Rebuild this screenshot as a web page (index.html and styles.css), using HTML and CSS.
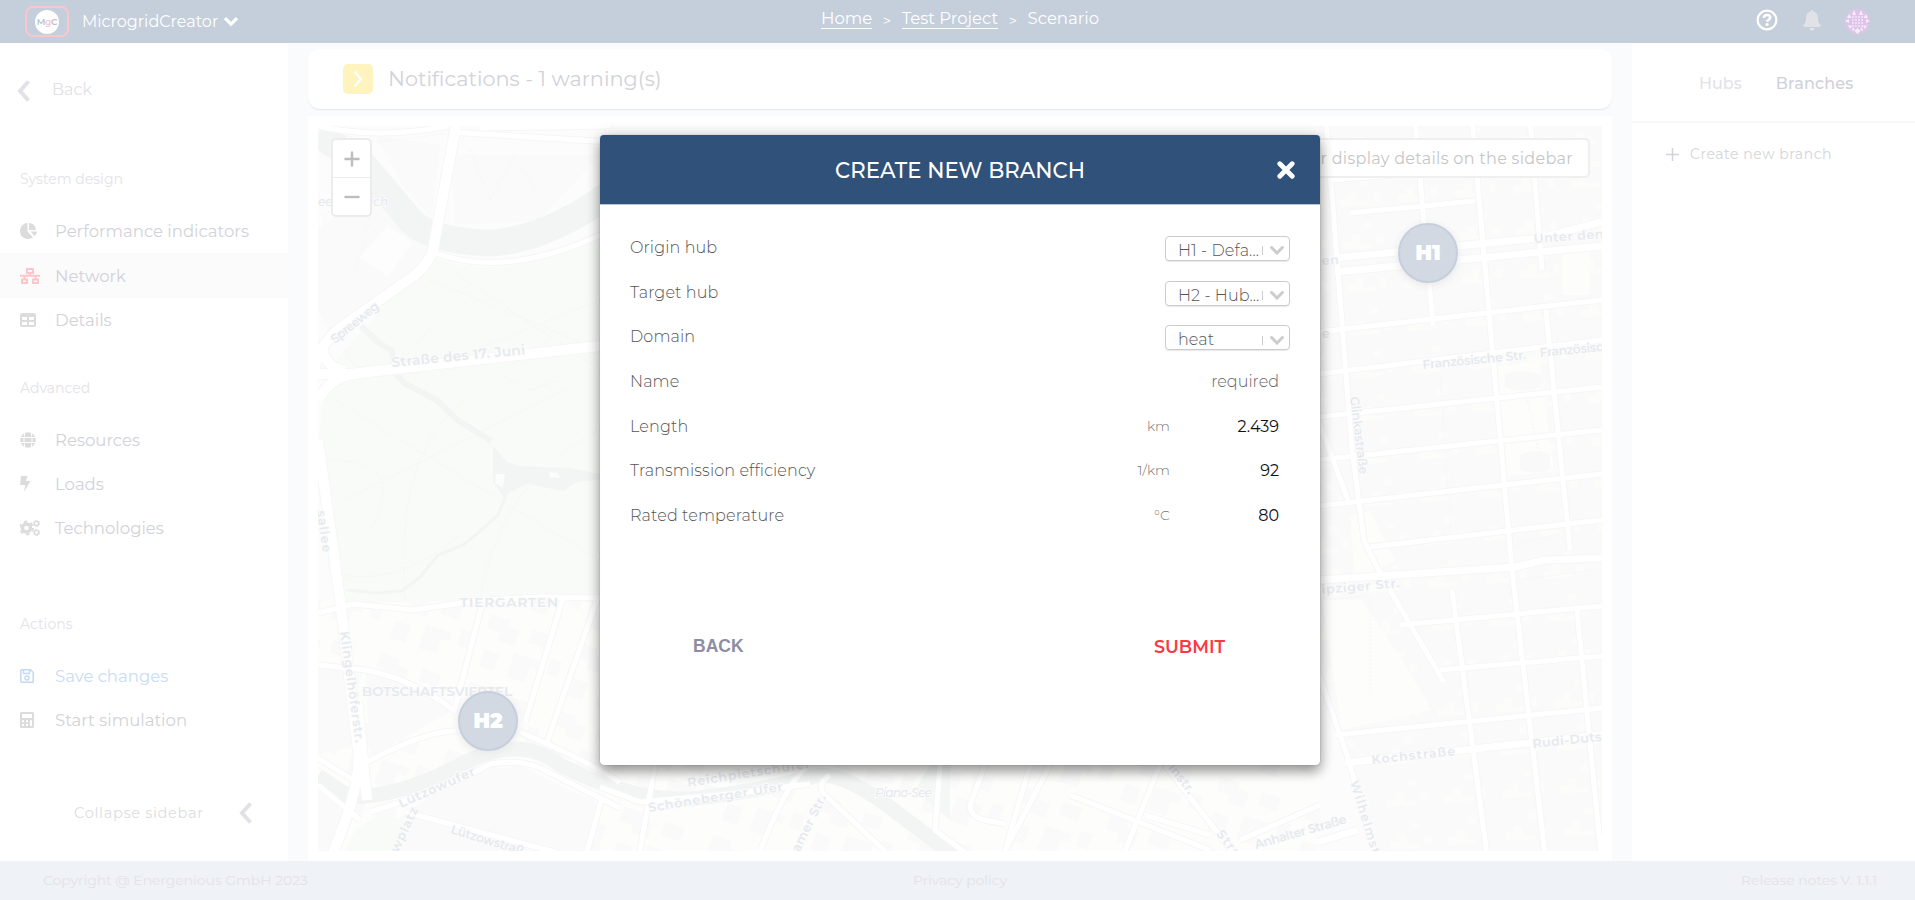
FILE: index.html
```html
<!DOCTYPE html>
<html lang="en">
<head>
<meta charset="utf-8">
<title>MicrogridCreator</title>
<link rel="stylesheet" href="styles.css">
</head>
<body>
<svg class="defs" width="0" height="0" aria-hidden="true">
  <symbol id="chev-left" viewBox="0 0 13 22"><path d="M11.500 1.500 3 11l8.500 9.500" fill="none" stroke="currentColor" stroke-width="4"/></symbol>
  <symbol id="chev-down" viewBox="0 0 14 9"><path d="M1.600 1.500 7 7l5.400-5.500" fill="none" stroke="#ccc" stroke-width="3" stroke-linecap="round"/></symbol>
</svg>
<div class="app">
  <header class="topbar">
    <div class="brand">
      <span class="logo"><span class="logo-disc">M<i>g</i>C</span></span>
      <span class="brand-name">MicrogridCreator</span>
      <svg class="brand-caret" width="16" height="11" viewBox="0 0 16 11"><path d="M2 2.200 8 8.200 14 2.200" fill="none" stroke="#fff" stroke-width="3.200"/></svg>
    </div>
    <nav class="crumbs"><a>Home</a><span class="sep">&gt;</span><a>Test Project</a><span class="sep">&gt;</span><span>Scenario</span></nav>
    <div class="tools">
      <svg class="help" width="22" height="22" viewBox="0 0 22 22"><circle cx="11" cy="11" r="9.400" fill="none" stroke="#fff" stroke-width="2.200"/><path d="M7.900 8.700C8 6.800 9.300 5.900 11 5.900s3.200 1 3.200 2.600c0 2.200-3 2.300-3 4.300" fill="none" stroke="#fff" stroke-width="2.500"/><circle cx="11.100" cy="15.500" r="1.600" fill="#fff"/></svg>
      <svg class="bell" width="18" height="21" viewBox="0 0 18 21"><path d="M9 0c.8 0 1.300.6 1.300 1.400C13.400 2 15 4.500 15 7.500c0 4.500 1 6 2.600 7.500.6.700.3 2-.9 2H1.300c-1.200 0-1.500-1.300-.9-2C2 13.500 3 12 3 7.500c0-3 1.600-5.500 4.700-6.100C7.700.6 8.200 0 9 0zM6.400 18h5.200c0 1.600-1.200 2.700-2.600 2.700S6.400 19.600 6.400 18z" fill="#e1e1e8"/></svg>
      <svg width="25" height="25" viewBox="0 0 25 25"><circle cx="12.500" cy="12.500" r="12.500" fill="#dfc3ea"/><g fill="#f4eefa"><path d="M9 1l2 5H7zM16 1l2 5h-4zM4 5l2.500 4H2zM21 5l2 4h-4.500zM0 12l4-2v4zM25 12l-4-2v4zM3 16l4 1-2 3zM22 16l-4 1 2 3zM12.500 19l3 3-3 3-3-3zM8 18l2 3-3 1zM17 18l-2 3 3 1z"/></g><path d="M7 8h11M7 11h11M7 14h11M7 17h11" stroke="#f4eefa" stroke-width="1.500" stroke-dasharray="1.700 1.400"/></svg>
    </div>
  </header>

  <div class="body">
    <aside class="sidebar">
      <a class="back"><svg width="13" height="22"><use href="#chev-left"/></svg><span>Back</span></a>
      <h6 class="sec sec-1">System design</h6>
      <a class="link"><svg width="18" height="16" viewBox="0 0 18 16"><path d="M7.500 0v8.500l5.500 5.700A8 8 0 1 1 7.500 0z" fill="#dcdcdc"/><path d="M9 0a7 7 0 0 1 7 7H9zM10.500 8.500H17a8 8 0 0 1-2.300 4.700z" fill="#dcdcdc"/></svg><span>Performance indicators</span></a>
      <a class="link active"><svg width="20" height="16" viewBox="0 0 20 16" fill="none" stroke="#fcc6cb" stroke-width="2"><path d="M7 1h6v4H7zM2 11.500h5V15H2zM13 11.500h5V15h-5zM0 7.800h20M10 5v3M4.500 8v3M15.500 8v3"/></svg><span>Network</span></a>
      <a class="link"><svg width="16" height="14" viewBox="0 0 16 14"><rect width="16" height="14" rx="2" fill="#dcdcdc"/><path d="M2 4h5v3H2zM9 4h5v3H9zM2 9h5v3H2zM9 9h5v3H9z" fill="#fff"/></svg><span>Details</span></a>
      <h6 class="sec sec-2">Advanced</h6>
      <a class="link"><svg width="16" height="16" viewBox="0 0 16 16"><circle cx="8" cy="8" r="7.800" fill="#dcdcdc"/><path d="M0 5.500h16M0 10.500h16M5 0c-1.500 5-1.500 11 0 16M11 0c1.500 5 1.500 11 0 16" fill="none" stroke="#fff" stroke-width="1"/></svg><span>Resources</span></a>
      <a class="link"><svg width="11" height="16" viewBox="0 0 11 16"><path d="M1 0h6.500L6 5h4.500L4 16l1.300-7H0z" fill="#dcdcdc"/></svg><span>Loads</span></a>
      <a class="link"><svg width="20" height="16" viewBox="0 0 20 16" fill="none" stroke="#dcdcdc"><circle cx="6.500" cy="8" r="4" stroke-width="3.400"/><circle cx="6.500" cy="8" r="6.400" stroke-width="2" stroke-dasharray="3.400 3.300"/><circle cx="16.500" cy="3.500" r="2.200" stroke-width="1.500"/><circle cx="16.500" cy="3.500" r="3.100" stroke-width=".9" stroke-dasharray="1.600 1.650"/><circle cx="16.500" cy="12.500" r="2.200" stroke-width="1.500"/><circle cx="16.500" cy="12.500" r="3.100" stroke-width=".9" stroke-dasharray="1.600 1.650"/></svg><span>Technologies</span></a>
      <h6 class="sec sec-3">Actions</h6>
      <a class="link save"><svg width="14" height="14" viewBox="0 0 14 14" fill="none" stroke="#c2d9f5" stroke-width="1.500"><path d="M.8 1.500Q.8.800 1.500.800H10.500L13.200 3.500v9q0 .7-.7.700h-11q-.7 0-.7-.7zM3.500.800v3.700h6V.800"/><circle cx="7" cy="9" r="2"/></svg><span>Save changes</span></a>
      <a class="link"><svg width="14" height="16" viewBox="0 0 14 16"><rect width="14" height="16" rx="1.500" fill="#dcdcdc"/><path d="M2 2h10v4H2zM2 8.300h2v2H2zM6 8.300h2v2H6zM10 8.300h2V14h-2zM2 12h2v2H2zM6 12h2v2H6z" fill="#fff"/></svg><span>Start simulation</span></a>
      <a class="collapse"><span>Collapse sidebar</span><svg width="13" height="22"><use href="#chev-left"/></svg></a>
    </aside>

    <main class="main">
      <section class="notice">
        <span class="notice-badge"><svg width="10" height="18" viewBox="0 0 10 18"><path d="M1.500 1.500 8 9l-6.500 7.500" fill="none" stroke="#fff" stroke-width="2"/></svg></span>
        <span class="notice-text">Notifications - 1 warning(s)</span>
      </section>
      <section class="mapcard">
        <svg class="map" viewBox="318 126 1284 725">
          <defs>
            <pattern id="blocks" width="58" height="43" patternUnits="userSpaceOnUse" patternTransform="translate(1326 131) rotate(-4.500)">
              <path d="M8 26h9v-6h8v10h12v4H8zM30 8h8v6h-8zM42 22h7v9h-7z" fill="#fcfcfa"/>
            </pattern>
            <pattern id="houses" width="93" height="71" patternUnits="userSpaceOnUse" patternTransform="rotate(18)">
              <path d="M6 6h20v7h12v16H20v-8H6zM50 8h20v14H50zM10 42h16v18H10zM40 36h28v9h-9v16H40zM76 30h12v16H76z" fill="#fafafa"/>
            </pattern>
            <g id="avenues">
              <path d="M457 120 433 250q-3 12-18 25L340 328q-22 18-25 40M318 374H350L600 346M318 400q15-26 40-26M345 371q-20-4-22-22M318 440 340 600 358 750q4 35-26 105M357 700l10 100"/>
            </g>
            <g id="streets">
              <path d="M433 252q70 28 170-18M318 613l35-9 60 6 70-10 60-3 60 1M483 600 454 712M563 598 525 722M597 600 547 742M318 665l48 5q50 10 90 42M365 763q60-32 90-32M520 732q70 30 100 50M318 758l45 28M370 812q80-25 120-48 30-5 50 4l80 40M318 785l42 35M405 812l150 40M602 798l-15 53M450 132l160 10M318 126q60 14 130 0M480 128l130-2"/>
              <path d="M1326 120 1352 450 1364 540q5 12 20 40l60 102M1415 120l18 205M1472 120l40 450 33 285M1530 120l12 150M1546 310l24 240M1577 610l24 245M1452 590l35 265M1318 672l28 80 30 103M1318 420l30 80"/>
              <path d="M1318 332 1602 300M1318 374l284-34M1318 417 1602 387M1318 460 1602 430M1318 506 1602 474M1370 547 1602 520M1400 625 1602 606M1440 670 1602 656M1335 735 1602 708M1330 180l150-12M1350 213l125-12"/>
              <path d="M655 765l-15 86M810 765q-20 10-50 86M600 787l40 15 90-8 80-10M830 775q-15 10-5 20l60 56M940 765l-5 65 40 30M985 765l-15 40q0 12 15 15l20 4M1050 765l-45 86M1070 795l140 55M1160 765l-35 86M1145 815l65 20M1030 765l-25 86M1165 765 1235 855M1240 840l80-35"/>
            </g>
            <g id="mains">
              <path d="M1335 258 1540 238 1602 222M1335 272 1602 246M1318 580 1515 567 1545 560 1602 558M1345 763 1602 735M1318 842l40-12"/>
            </g>
          </defs>
          <rect x="318" y="126" width="1284" height="725" fill="#fcfcfc"/>
          <path d="M318 600H620L1320 540V851H318z" fill="#fdfdfc"/>
          <path d="M318 600H620L1320 700V851H318z" fill="url(#houses)"/>
          <path d="M325 372 430 255q60 30 170-15V597L480 600 345 603 318 455z" fill="#f9fbf9"/>
          <path d="M375 135l65 10-8 75-30-35zM450 155h150l-60 65-85 5zM318 230l50-40 65 60-100 90-15-30z" fill="#fafafa"/>
          <path d="M388 225l24 18-24 34-28-20z" fill="#fdfdfd"/>
          <path d="M318 665h30l10 80-40 10zM365 672q45 5 85 40l-80 45zM410 810l50-35 60-10 80 40v46H360zM318 790l35 30-20 31h-15z" fill="#fafafa"/>
          <path d="M355 830l25-15 25 5-15 31h-45z" fill="#f9fbf9"/>
          <path d="M1318 126H1602V851H1380L1318 650z" fill="#fafafa"/>
          <path d="M1318 126H1602V851H1380L1318 650z" fill="url(#blocks)"/>
          <path d="M1497 366l42-5 15 110-47 5zM1562 245h28v50h-28zM1350 515l20-4 25 50-40 20zM1322 600h40l40 60 30 50-90 20z" fill="#fdfdfb"/>
          <path d="M1505 375q12-8 36 0v12q-18 8-36 0zM1520 455q15-8 30 0v15q-15 5-30 0z" fill="#f9f9f9"/>
          <!-- water -->
          <g fill="none" stroke="#f3f5f5" stroke-linejoin="round">
            <path d="M318 134 362 163 412 222Q432 241 490 243 550 240 622 185" stroke-width="27"/>
            <path d="M318 776 350 797 Q400 797 460 765 T560 765Q640 805 700 798T820 775Q850 775 900 815L960 860" stroke-width="15"/>
            <path d="M361 326l18 17 13 8 2 20 10 12 34 18 18 18 35 22" stroke-width="6"/>
            <path d="M508 490l-10 25-20 18-15 12-25 10-18 22-18 14-25 2-30-3" stroke-width="3"/>
          </g>
          <path d="M493 446l14 16 13 4 50 2 35 7v4l-28 3-14 9-36-7-20 10-2 6-12-18z" fill="#f3f5f5"/>
          <path d="M930 765h20v55l-35-30z" fill="#f5f7f7"/>
          <path d="M496 474l9 0-2 14-8-5zM549 472l9 1 2 5-10-1z" fill="#fbfcfb"/>
          <!-- footpaths -->
          <g fill="none" stroke="#f4f6f5" stroke-width="1" stroke-dasharray="2 2">
            <path d="M335 400 500 500 600 560M345 350q30 60 90-30M430 280l170 70M450 270l150 100M600 300l-200 80M405 600q-10-150 60-200M345 500l120-60 100-50M330 460q80 0 40 70M480 600q20-120 120-170M500 375l30 15 30-10v-25M340 575q60 10 120-40M325 215q30-25 45 5l-15 50-30-30zM440 235q60 25 110-12"/>
            <path d="M318 130l60 12 80-10 140 6M470 150l20 50 25-45 20 35 30-30M1527 400l14 60M1498 440l60-7M1440 375l12 170M1515 545l60-15M1515 580l80-10M1330 600l40-5v100"/>
          </g>
          <!-- road casings, then surfaces -->
          <g fill="none" stroke="#f6f6f6" stroke-linejoin="round">
            <use href="#streets" stroke-width="7"/><use href="#mains" stroke-width="9"/><use href="#avenues" stroke-width="12"/>
          </g>
          <g fill="none" stroke="#fff" stroke-linejoin="round">
            <use href="#streets" stroke-width="5"/><use href="#mains" stroke-width="7"/><use href="#avenues" stroke-width="10"/>
          </g>
          <g class="maplabels">
            <text class="thin" x="318" y="206">een</text>
            <text class="thin" x="370" y="206">ich</text>
            <text transform="translate(335 344) rotate(-39)" textLength="58">Spreeweg</text>
            <text class="big" transform="translate(392 367) rotate(-5.500)" textLength="134">Straße des 17. Juni</text>
            <text transform="translate(317 511) rotate(82)" textLength="42">sallee</text>
            <text class="big" x="460" y="607" textLength="98">TIERGARTEN</text>
            <text class="big" x="362" y="696" textLength="150">BOTSCHAFTSVIERTEL</text>
            <text transform="translate(340 632) rotate(82)" textLength="112">Klingelhöferstr.</text>
            <text transform="translate(401 808) rotate(-24)" textLength="82">Lützowufer</text>
            <text transform="translate(398 853) rotate(-65)" textLength="48">wplatz</text>
            <text transform="translate(450 833) rotate(17)" textLength="76">Lützowstraß</text>
            <text transform="translate(688 787) rotate(-9)" textLength="124">Reichpietschufer</text>
            <text transform="translate(649 812) rotate(-9)" textLength="136">Schöneberger Ufer</text>
            <text transform="translate(799 853) rotate(-64)" textLength="62">amer Str.</text>
            <text class="thin" x="875" y="797" textLength="57">Piano-See</text>
            <text transform="translate(1168 768) rotate(52)" textLength="34">instr.</text>
            <text transform="translate(1216 834) rotate(52)" textLength="30">Stra</text>
            <text transform="translate(1256 849) rotate(-16)" textLength="95">Anhalter Straße</text>
            <text transform="translate(1350 782) rotate(73)" textLength="76">Wilhelmst</text>
            <text transform="translate(1372 764) rotate(-6)" textLength="84">Kochstraße</text>
            <text transform="translate(1533 748) rotate(-6)" textLength="86">Rudi-Dutsch</text>
            <text transform="translate(1322 594) rotate(-5)" textLength="78">ipziger Str.</text>
            <text transform="translate(1350 397) rotate(83)" textLength="78">Glinkastraße</text>
            <text transform="translate(1423 369) rotate(-5.500)" textLength="104">Französische Str.</text>
            <text transform="translate(1540 357) rotate(-5.500)" textLength="72">Französisch</text>
            <text transform="translate(1534 243) rotate(-4)" textLength="82">Unter den L</text>
            <text transform="translate(1322 265) rotate(-4)" textLength="17">en</text>
            <text x="1322" y="338">e</text>
          </g>
        </svg>
        <div class="zoomctl"><span><svg width="16" height="16" viewBox="0 0 16 16"><path d="M8 .5v15M.5 8h15" stroke="#bdbdbd" stroke-width="2.400"/></svg></span><span><svg width="16" height="16" viewBox="0 0 16 16"><path d="M.5 8h15" stroke="#bdbdbd" stroke-width="2.400"/></svg></span></div>
        <div class="hint">or display details on the sidebar</div>
        <div class="hub hub-1">H1</div>
        <div class="hub hub-2">H2</div>
      </section>
    </main>

    <aside class="rpanel">
      <div class="tabs"><span class="tab">Hubs</span><span class="tab on">Branches</span></div>
      <a class="create"><svg width="13" height="13" viewBox="0 0 13 13"><path d="M6.500 0v13M0 6.500h13" stroke="#d2d2d8" stroke-width="1.500"/></svg><span>Create new branch</span></a>
    </aside>
  </div>

  <footer class="foot"><span>Copyright @ Energenious GmbH 2023</span><span>Privacy policy</span><span>Release notes V. 1.1.1</span></footer>
</div>

<div class="modal">
  <div class="modal-head"><span>CREATE NEW BRANCH</span>
    <svg class="close" width="18" height="18" viewBox="0 0 18 18"><path d="M2.800 2.800 15.200 15.200M15.200 2.800 2.800 15.200" stroke="#fff" stroke-width="4.800" stroke-linecap="round"/></svg>
  </div>
  <div class="form">
    <div class="row"><label>Origin hub</label><div class="select"><span>H1 - Defa...</span><i></i><svg width="14" height="9"><use href="#chev-down"/></svg></div></div>
    <div class="row"><label>Target hub</label><div class="select"><span>H2 - Hub...</span><i></i><svg width="14" height="9"><use href="#chev-down"/></svg></div></div>
    <div class="row"><label>Domain</label><div class="select"><span>heat</span><i></i><svg width="14" height="9"><use href="#chev-down"/></svg></div></div>
    <div class="row"><label>Name</label><span class="val ph">required</span></div>
    <div class="row"><label>Length</label><span class="unit">km</span><span class="val">2.439</span></div>
    <div class="row"><label>Transmission efficiency</label><span class="unit">1/km</span><span class="val">92</span></div>
    <div class="row"><label>Rated temperature</label><span class="unit">°C</span><span class="val">80</span></div>
  </div>
  <div class="actions"><button class="btn-back">BACK</button><button class="btn-submit">SUBMIT</button></div>
</div>
</body>
</html>
```
FILE: styles.css
```css
* { box-sizing: border-box; }
body { margin: 0; font-family: Montserrat, Inter, "Open Sans", sans-serif; background: #fafbfd; overflow: hidden; }
svg { display: block; flex: none; }
.defs { position: absolute; }
.app { width: 1915px; height: 900px; display: flex; flex-direction: column; }

.topbar { height: 43px; background: #c5cedb; color: #fff; display: grid; grid-template-columns: 821px 1fr auto; }
.brand { display: flex; align-items: center; padding-left: 25px; }
.logo { width: 44px; height: 31px; border: 2px solid #fac6ce; border-radius: 8px; display: flex; align-items: center; justify-content: center; }
.logo-disc { width: 24px; height: 24px; border-radius: 50%; background: #fff; color: #b9bfc9; font-size: 9px; line-height: 24px; text-align: center; font-weight: 600; letter-spacing: -.3px; }
.logo-disc i { font-style: normal; color: #fac6ce; }
.brand-name { margin-left: 13px; font-size: 16px; white-space: nowrap; }
.brand-caret { margin-left: 5px; }
.crumbs { display: flex; align-items: flex-start; padding-top: 9px; font-size: 16.500px; line-height: 19px; white-space: nowrap; }
.crumbs a { border-bottom: 1px solid #fff; }
.sep { width: 29.500px; text-align: center; font-size: 14.500px; line-height: 24px; }
.tools { display: flex; align-items: center; gap: 24px; padding-right: 45px; }
.help { margin-bottom: 3px; }
.bell { margin: 0 0 2px 1px; }

.body { flex: 1; min-height: 0; display: grid; grid-template-columns: 288px 1304px 283px; column-gap: 20px; }
.sidebar { background: #fff; display: flex; flex-direction: column; }
.back { display: flex; align-items: center; gap: 22px; padding: 35px 0 0 17px; height: 60px; font-size: 16px; color: #e1e1e7; }
.back span { margin-top: -3px; }
.sec { margin: 0 0 20px 20px; font-size: 14px; font-weight: 400; line-height: 20px; color: #e3e3e8; }
.sec-1 { margin-top: 66px; }
.sec-2 { margin-top: 36px; }
.sec-3 { margin-top: 64px; }
.link { height: 44px; display: grid; grid-template-columns: 35px 1fr; align-items: center; padding-left: 20px; font-size: 16.500px; color: #d2d2d9; }
.link.active { background: #fbfbfb; height: 45px; }
.link.save { color: #c9dcf5; }
.collapse { display: flex; align-items: center; margin: 60px 0 0 74px; height: 22px; font-size: 14.500px; color: #dddde2; letter-spacing: .7px; }
.collapse svg { margin-left: auto; margin-right: 36px; color: #e1e1e7; }

.main { display: flex; flex-direction: column; padding-top: 6px; gap: 7px; }
.notice { height: 60px; border-radius: 12px; background: #fff; box-shadow: 0 1px 1px #e4e7e8; display: flex; align-items: center; padding-left: 35px; }
.notice-badge { width: 30px; height: 30px; border-radius: 5px; background: #fff4bf; display: flex; align-items: center; justify-content: center; }
.notice-text { margin: -1px 0 0 15px; font-size: 20.800px; color: #d2d2d9; }
.mapcard { flex: 1; background: #fff; padding: 10px; position: relative; }
.map { width: 1284px; height: 725px; }
.maplabels { fill: #e6e9ed; font-size: 12.500px; font-weight: 600; stroke: #fcfcfc; stroke-width: 2px; paint-order: stroke; }
.maplabels .big { font-size: 13.500px; }
.maplabels .thin { font-size: 12px; font-weight: 500; font-style: italic; }
.zoomctl { position: absolute; left: 23px; top: 22px; width: 41px; height: 79px; border: 2px solid #ececec; border-radius: 5px; background: #fff; display: grid; grid-template-rows: 37px 38px; }
.zoomctl span { display: grid; place-items: center; }
.zoomctl span + span { border-top: 1px solid #ececec; }
.hint { position: absolute; right: 22px; top: 22px; height: 40px; border: 2px solid #efefef; border-radius: 5px; background: #fff; padding: 0 15px; font-size: 16px; line-height: 37px; color: #c6c6c6; letter-spacing: .3px; white-space: nowrap; }
.hub { position: absolute; width: 60px; height: 60px; border-radius: 50%; border: 2px solid #c5cfdd; background: #d3d9e2; color: #fff; font-size: 21px; font-weight: 900; line-height: 56px; text-align: center; box-shadow: 0 2px 8px #e6e6e6; }
.hub-1 { left: 1090px; top: 107px; }
.hub-2 { left: 150px; top: 575px; }

.rpanel { background: #fff; }
.tabs { height: 80px; border-bottom: 2px solid #f8f8f9; display: flex; padding: 31px 0 0 67px; gap: 34px; font-size: 16px; line-height: 20px; font-weight: 500; color: #e2e2e8; }
.tab.on { color: #d0d0d7; letter-spacing: .2px; }
.create { display: flex; align-items: center; gap: 11px; padding: 21px 0 0 34px; font-size: 14px; line-height: 20px; color: #d4d4da; letter-spacing: .55px; }

.foot { height: 39px; background: #eff2f6; color: #e2e3e8; font-size: 13.900px; line-height: 39px; display: grid; grid-template-columns: 870px 1fr auto; padding: 0 38px 0 43px; }

.modal { position: absolute; left: 600px; top: 135px; width: 720px; height: 630px; border-radius: 4px; background: #fff; box-shadow: 0 0 1px rgba(0,0,0,.5), 0 7px 12px rgba(0,0,0,.3), 0 2px 16px rgba(0,0,0,.2); overflow: hidden; display: flex; flex-direction: column; color: #555; }
.modal-head { height: 70px; flex: none; background: #30517a; color: #fff; font-size: 21.280px; font-weight: 500; display: grid; grid-template-columns: 1fr auto; align-items: center; padding: 1px 25px 0 43px; text-align: center; border-bottom: 1px solid #b9c5d3; }
.close { margin-bottom: 1px; }
.form { padding: 22px 30px 0; font-weight: 300; font-size: 16px; }
.row { height: 44.700px; display: flex; align-items: center; line-height: 20px; padding-bottom: 3px; }
.row label { flex: 1; letter-spacing: .13px; }
.select { width: 125px; height: 25px; margin-top: 1px; border: 1px solid #ccc; border-radius: 4px; box-shadow: 0 1px 1px #e8e8e8; padding: 5px 5px 0 12px; display: flex; align-items: center; overflow: hidden; white-space: nowrap; }
.select span { flex: 1; letter-spacing: .1px; }
.select i { width: 1px; height: 9px; background: #ccc; margin-right: 7px; }
.val { width: 120px; text-align: right; padding-right: 11px; color: #111; font-weight: 400; }
.val.ph { color: #666; font-weight: 300; }
.unit { font-size: 14px; color: #777; padding-bottom: 2px; }
.actions { display: flex; justify-content: space-between; margin: 87px 95px 0 93px; height: 40px; align-items: center; }
.actions button { border: 0; background: none; padding: 0; }
.btn-back { font: 700 17.500px "Liberation Sans", Arial, sans-serif; color: #8c8da3; }
.btn-submit { font: 600 17.500px Montserrat, Inter, sans-serif; color: #f93a45; padding-top: 3px; }
```
